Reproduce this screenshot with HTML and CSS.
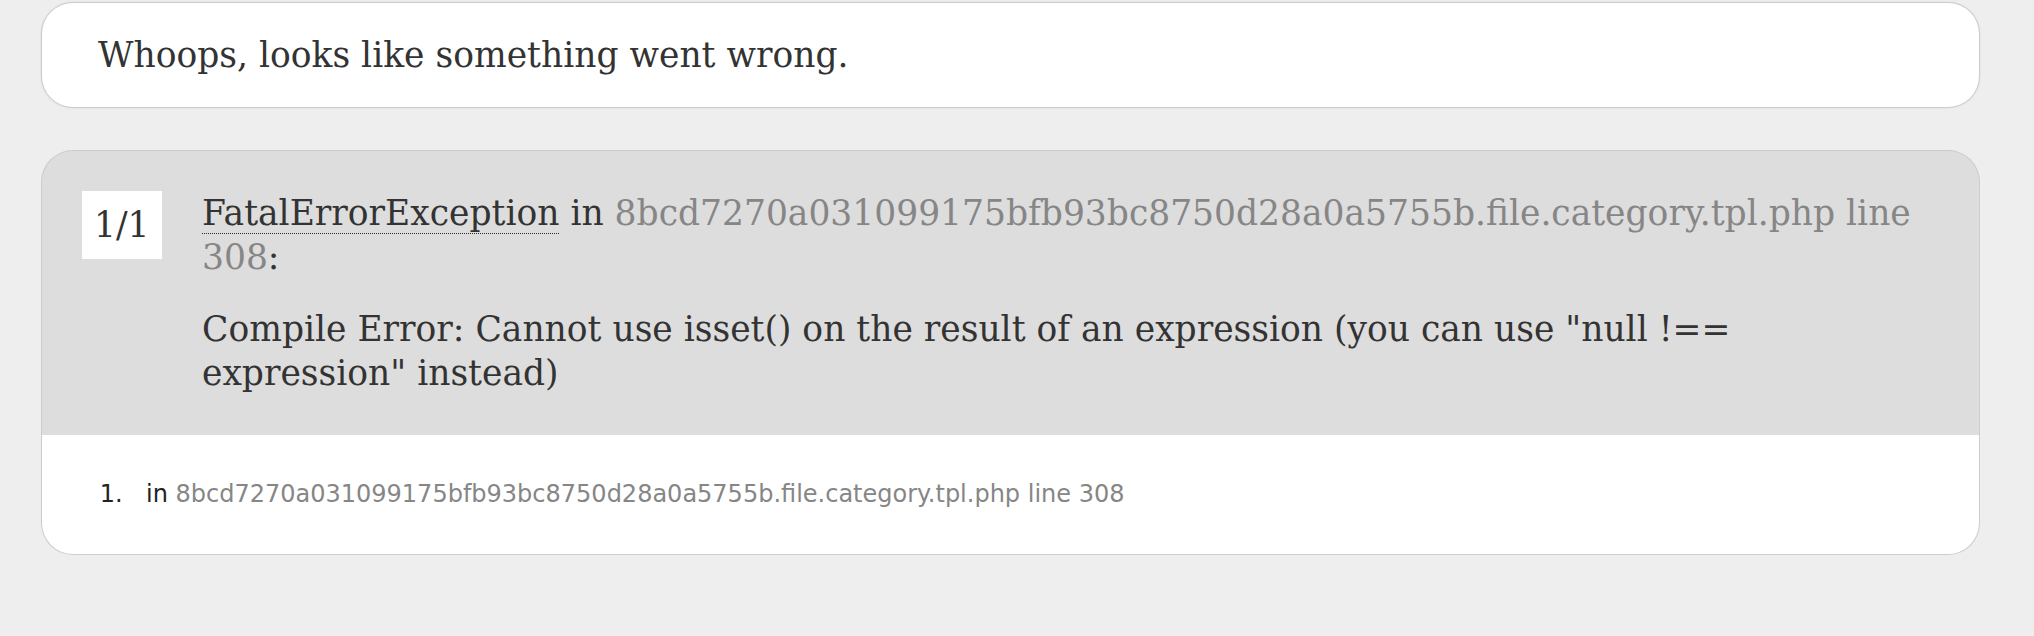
FILE: index.html
```html
<!DOCTYPE html>
<html lang="en">
<head>
<meta charset="utf-8">
<title>Whoops, looks like something went wrong.</title>
<link rel="stylesheet" href="styles.css">
</head>
<body class="page">
  <div class="content">
    <h1 class="headline">Whoops, looks like something went wrong.</h1>
    <div class="exception">
      <h2 class="block-exception">
        <span class="counter">1/1</span>
        <span class="title"><abbr class="exc-class" title="Symfony\Component\Debug\Exception\FatalErrorException">FatalErrorException</abbr> in <a class="file-link" title="8bcd7270a031099175bfb93bc8750d28a0a5755b.file.category.tpl.php line 308">8bcd7270a031099175bfb93bc8750d28a0a5755b.file.category.tpl.php line 308</a>:</span>
        <span class="message">Compile Error: Cannot use isset() on the result of an expression (you can use "null !== expression" instead)</span>
      </h2>
      <div class="block">
        <ol class="traces">
          <li class="trace">in <a class="file-link" title="8bcd7270a031099175bfb93bc8750d28a0a5755b.file.category.tpl.php line 308">8bcd7270a031099175bfb93bc8750d28a0a5755b.file.category.tpl.php line 308</a></li>
        </ol>
      </div>
    </div>
  </div>
</body>
</html>
```
FILE: styles.css
```css
html {
  margin: 0;
  background: #eee;
}

.page {
  margin: 0;
  padding: 2px 54px 0 41px;
  background: #eee;
  color: #333;
  font-family: "DejaVu Sans", Verdana, sans-serif;
}

.headline {
  margin: 0 0 42px;
  padding: 30px 56px;
  background: #fff;
  border: 1px solid #ccc;
  border-radius: 32px;
  box-shadow: 0 0 2px rgba(128, 128, 128, 0.2);
  font-family: "DejaVu Serif", Georgia, serif;
  font-size: 34.5px;
  line-height: 44px;
  font-weight: normal;
  color: #333;
}

.block-exception {
  margin: 0;
  padding: 40px;
  background: #ddd;
  border: 1px solid #ccc;
  border-bottom: none;
  border-radius: 32px 32px 0 0;
  overflow: hidden;
  word-wrap: break-word;
  font-family: "DejaVu Serif", Georgia, serif;
  font-size: 34.5px;
  line-height: 44px;
  font-weight: normal;
  color: #333;
}

.counter {
  float: left;
  display: block;
  padding: 12px;
  margin-right: 20px;
  background: #fff;
  color: #333;
}

.title {
  display: block;
  margin-left: 120px;
  margin-bottom: 28px;
}

.message {
  display: block;
  margin-left: 120px;
}

.exc-class {
  text-decoration: none;
  border-bottom: 1px dotted #333;
}

.file-link {
  color: #868686;
  text-decoration: none;
}

.block {
  padding: 20px 56px;
  background: #fff;
  border: 1px solid #ccc;
  border-top: none;
  border-radius: 0 0 32px 32px;
}

.traces {
  margin: 0;
  padding: 20px 0;
}

.trace {
  margin-left: 40px;
  padding: 4px 8px;
  font-size: 24px;
  line-height: 31px;
  list-style-type: decimal;
  color: #222;
}

.trace::marker {
  content: counter(list-item) ".\00a0\00a0";
}
```
